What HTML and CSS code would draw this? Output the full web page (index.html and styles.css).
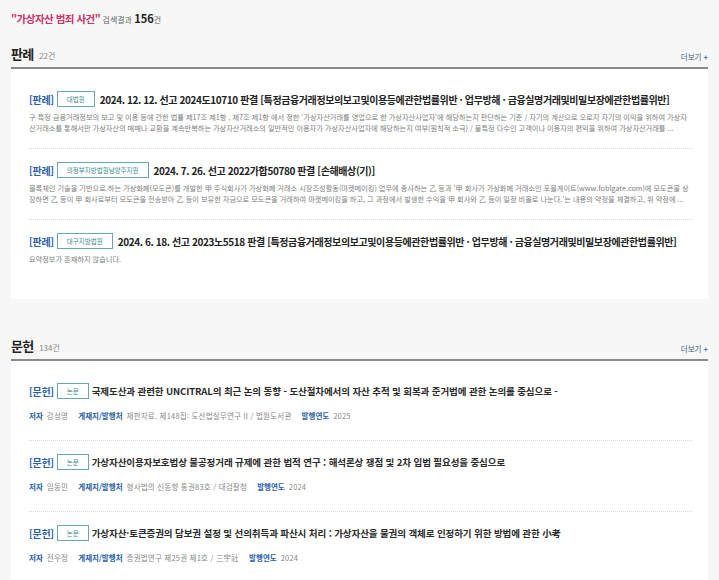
FILE: index.html
```html
<!DOCTYPE html>
<html lang="ko">

<head>
    <meta charset="UTF-8">
    <meta name="viewport" content="width=device-width, initial-scale=1.0">
    <title>통합검색 결과</title>
    <link rel="stylesheet" href="styles.css">
</head>

<body>
    <div class="page">
        <!-- 검색 결과 요약 -->
        <p class="result-count">
            <strong class="keyword">"가상자산 범죄 사건"</strong> 검색결과 <b class="total">156</b>건
        </p>

        <!-- 판례 -->
        <section class="group">
            <div class="group-head">
                <h2>판례 <span class="count">22건</span></h2>
                <a href="#" class="more">더보기 <i>+</i></a>
            </div>
            <ul class="list">
                <li class="item">
                    <div class="item-title">
                        <span class="kind">[판례]</span>
                        <span class="badge">대법원</span>
                        <span class="name">2024. 12. 12. 선고 2024도10710 판결 [특정금융거래정보의보고및이용등에관한법률위반 · 업무방해 · 금융실명거래및비밀보장에관한법률위반]</span>
                    </div>
                    <p class="summary">구 특정 금융거래정보의 보고 및 이용 등에 관한 법률 제17조 제1항 , 제7조 제1항 에서 정한 '가상자산거래를 영업으로 한 가상자산사업자'에 해당하는지 판단하는 기준 / 자기의 계산으로 오로지 자기의 이익을 위하여 가상자산거래소를 통해서만 가상자산의 매매나 교환을 계속반복하는 가상자산거래소의 일반적인 이용자가 가상자산사업자에 해당하는지 여부(원칙적 소극) / 불특정 다수인 고객이나 이용자의 편익을 위하여 가상자산거래를 ...</p>
                </li>
                <li class="item">
                    <div class="item-title">
                        <span class="kind">[판례]</span>
                        <span class="badge">의정부지방법원남양주지원</span>
                        <span class="name">2024. 7. 26. 선고 2022가합50780 판결 [손해배상(기)]</span>
                    </div>
                    <p class="summary">블록체인 기술을 기반으로 하는 가상화폐(모도큰)를 개발한 甲 주식회사가 가상화폐 거래소 시장조성활동(마켓메이킹) 업무에 종사하는 乙 등과 '甲 회사가 가상화폐 거래소인 포블게이트(www.foblgate.com)에 모도큰을 상장하면 乙 등이 甲 회사로부터 모도큰을 전송받아 乙 등이 보유한 자금으로 모도큰을 거래하여 마켓메이킹을 하고, 그 과정에서 발생한 수익을 甲 회사와 乙 등이 일정 비율로 나눈다.'는 내용의 약정을 체결하고, 위 약정에 ...</p>
                </li>
                <li class="item">
                    <div class="item-title">
                        <span class="kind">[판례]</span>
                        <span class="badge">대구지방법원</span>
                        <span class="name">2024. 6. 18. 선고 2023노5518 판결 [특정금융거래정보의보고및이용등에관한법률위반 · 업무방해 · 금융실명거래및비밀보장에관한법률위반]</span>
                    </div>
                    <p class="summary">요약정보가 존재하지 않습니다.</p>
                </li>
            </ul>
        </section>

        <!-- 문헌 -->
        <section class="group">
            <div class="group-head">
                <h2>문헌 <span class="count">134건</span></h2>
                <a href="#" class="more">더보기 <i>+</i></a>
            </div>
            <ul class="list">
                <li class="item doc">
                    <div class="item-title">
                        <span class="kind">[문헌]</span>
                        <span class="badge">논문</span>
                        <span class="name">국제도산과 관련한 UNCITRAL의 최근 논의 동향 - 도산절차에서의 자산 추적 및 회복과 준거법에 관한 논의를 중심으로 -</span>
                    </div>
                    <div class="meta">
                        <span class="label">저자</span><span class="value">강성영</span>
                        <span class="label">게재지/발행처</span><span class="value">재판자료. 제148집: 도산법실무연구 II / 법원도서관</span>
                        <span class="label">발행연도</span><span class="value">2025</span>
                    </div>
                </li>
                <li class="item doc">
                    <div class="item-title">
                        <span class="kind">[문헌]</span>
                        <span class="badge">논문</span>
                        <span class="name">가상자산이용자보호법상 불공정거래 규제에 관한 법적 연구 : 해석론상 쟁점 및 2차 입법 필요성을 중심으로</span>
                    </div>
                    <div class="meta">
                        <span class="label">저자</span><span class="value">임동민</span>
                        <span class="label">게재지/발행처</span><span class="value">형사법의 신동향 통권83호 / 대검찰청</span>
                        <span class="label">발행연도</span><span class="value">2024</span>
                    </div>
                </li>
                <li class="item doc">
                    <div class="item-title">
                        <span class="kind">[문헌]</span>
                        <span class="badge">논문</span>
                        <span class="name">가상자산·토큰증권의 담보권 설정 및 선의취득과 파산시 처리 : 가상자산을 물권의 객체로 인정하기 위한 방법에 관한 小考</span>
                    </div>
                    <div class="meta">
                        <span class="label">저자</span><span class="value">전우정</span>
                        <span class="label">게재지/발행처</span><span class="value">증권법연구 제25권 제1호 / 三宇社</span>
                        <span class="label">발행연도</span><span class="value">2024</span>
                    </div>
                </li>
            </ul>
        </section>
    </div>
</body>

</html>
```

FILE: styles.css
```css
/* 기본 */
body {
    margin: 0;
    background-color: #f7f7f7;
    color: #222;
    font-family: "Noto Sans CJK KR", "Noto Sans", sans-serif;
}

.page {
    padding: 10px 11px 0;
}

/* 검색 결과 요약 */
.result-count {
    margin: 0;
    line-height: 16px;
    font-size: 8px;
    color: #666;
}

.keyword {
    font-size: 10.5px;
    letter-spacing: -0.5px;
    color: #cc3366;
}

.total {
    font-size: 11px;
    color: #222;
}

/* 그룹 */
.group {
    margin-top: 17px;
}

.group + .group {
    margin-top: 38px;
}

.group-head {
    display: flex;
    justify-content: space-between;
    align-items: flex-end;
    padding-bottom: 2px;
    border-bottom: 2px solid #8a8a8a;
}

.group-head h2 {
    margin: 0;
    font-size: 13px;
    line-height: 18px;
    letter-spacing: -0.8px;
    color: #222;
}

.group-head .count {
    margin-left: 3px;
    font-size: 8px;
    font-weight: 400;
    letter-spacing: 0;
    color: #888;
}

.more {
    margin-bottom: 3px;
    font-size: 7.5px;
    color: #45607a;
    text-decoration: none;
}

.more i {
    font-style: normal;
    font-weight: 700;
    color: #3b6fb6;
}

/* 목록 */
.list {
    margin: 0;
    padding: 9px 16px 20px 18px;
    list-style: none;
    background-color: #fff;
}

.item {
    padding: 13px 0 14px;
}

.item + .item {
    border-top: 1px dotted #d8d8d8;
}

.item.doc {
    padding-bottom: 19px;
}

.item-title {
    display: flex;
    align-items: center;
    height: 16px;
    white-space: nowrap;
}

.kind {
    font-size: 10px;
    font-weight: 700;
    letter-spacing: -0.3px;
    color: #2a5ea8;
}

.badge {
    margin: 0 5px 0 3px;
    padding: 0 9px;
    height: 14px;
    line-height: 14px;
    border: 1px solid #6aa7a8;
    font-size: 6.5px;
    color: #3d8b8c;
    background-color: #fff;
}

.name {
    font-size: 10px;
    font-weight: 700;
    letter-spacing: -0.4px;
    color: #222;
}

.doc .badge {
    margin-right: 3px;
}

.doc .name {
    font-size: 9.5px;
    letter-spacing: -0.1px;
    color: #2a2a2a;
}

.summary {
    margin: 5px 0 0;
    font-size: 7.2px;
    line-height: 11px;
    color: #808080;
}

/* 문헌 정보 */
.meta {
    margin-top: 11px;
    font-size: 7.5px;
    line-height: 11px;
    color: #888;
}

.meta .label {
    margin-right: 4px;
    font-weight: 700;
    color: #2a5ea8;
}

.meta .value {
    margin-right: 8px;
    letter-spacing: 0.2px;
}
```
